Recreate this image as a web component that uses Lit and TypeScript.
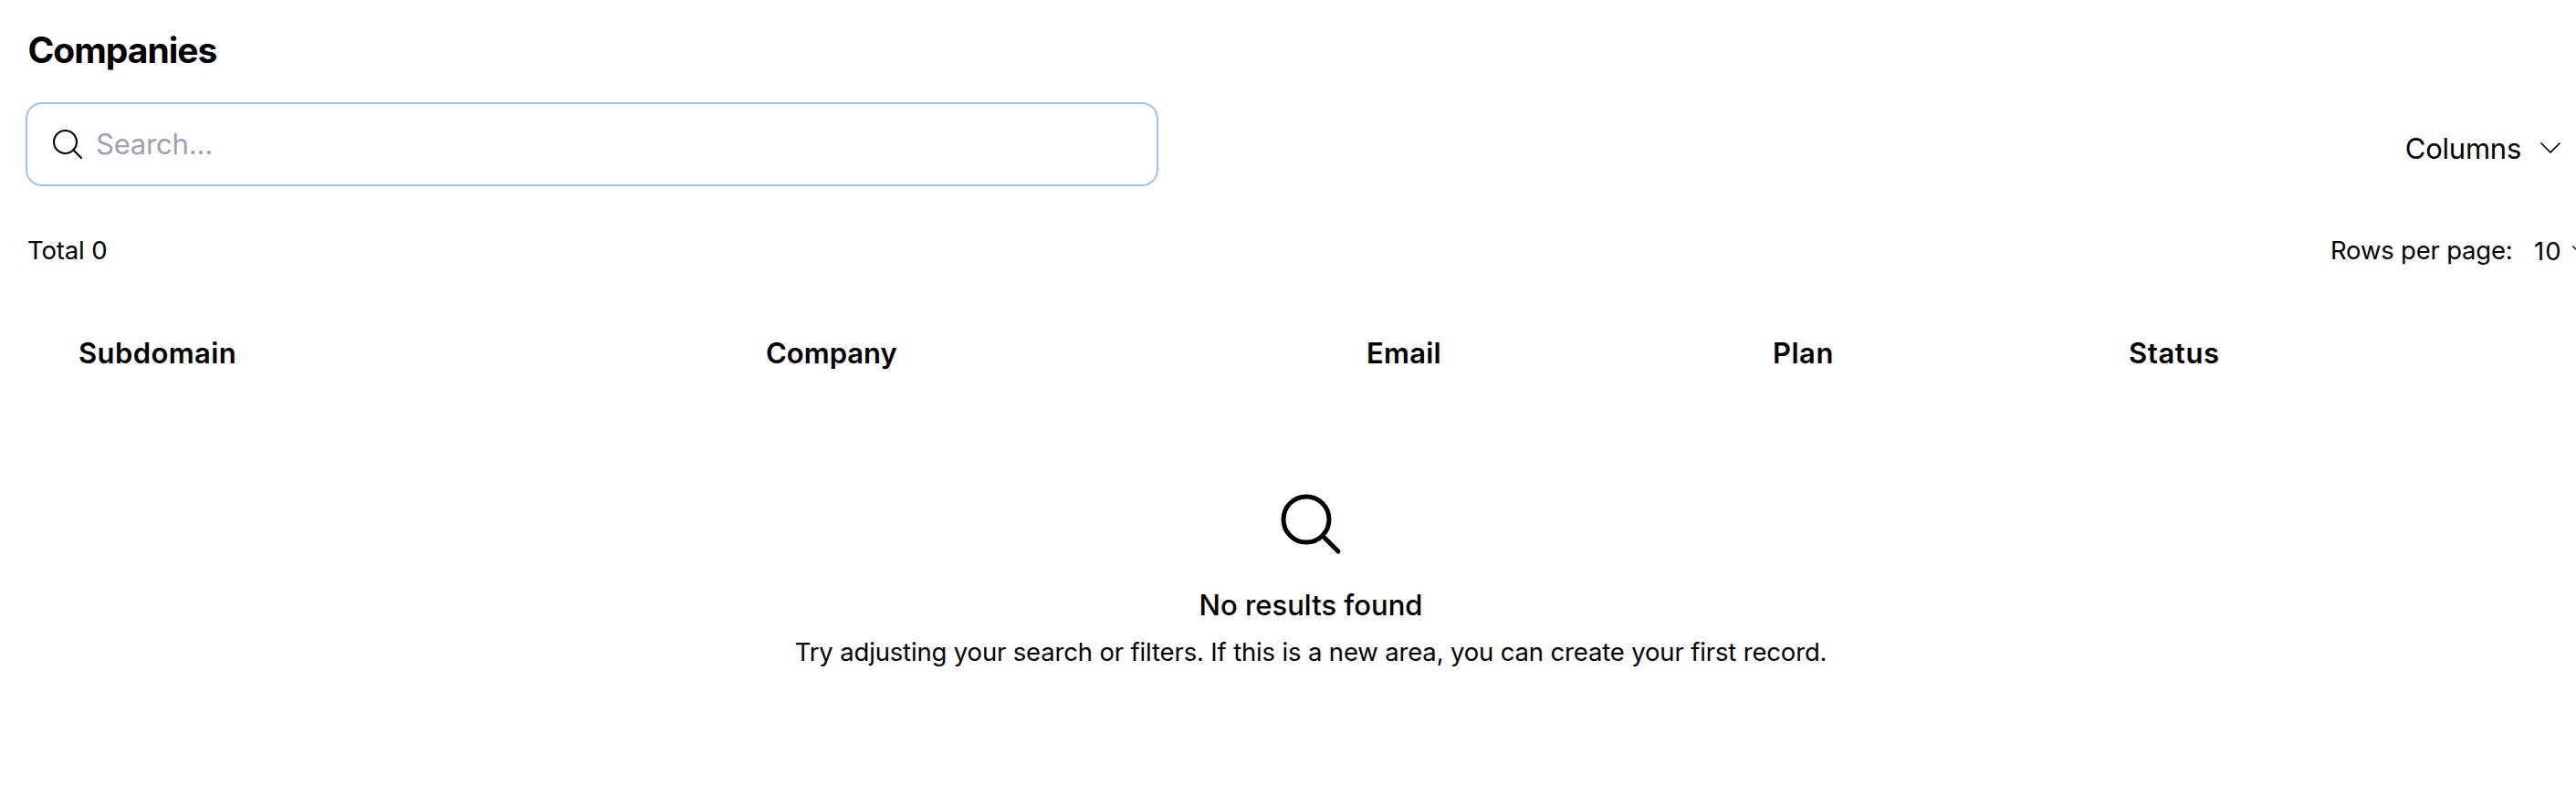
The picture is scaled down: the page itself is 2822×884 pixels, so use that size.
import { LitElement, html, css } from "lit";
import { customElement, property, state } from "lit/decorators.js";

@customElement("search-icon")
class SearchIcon extends LitElement {
  @property({ type: Number }) size = 40;
  @property({ type: Number }) weight = 1.25;

  static styles = css`
    :host {
      display: block;
      flex: none;
    }
    svg {
      display: block;
    }
  `;

  render() {
    return html`<svg
      width=${this.size}
      height=${this.size}
      viewBox="0 0 24 24"
      fill="none"
      stroke="currentColor"
      stroke-width=${this.weight}
      stroke-linecap="round"
      stroke-linejoin="round"
    >
      <circle cx="10.5" cy="10.5" r="7.5" />
      <path d="m21 21-5.197-5.197" />
    </svg>`;
  }
}

@customElement("app-root")
class AppRoot extends LitElement {
  @state() private columns = [
    { name: "Subdomain", cls: "subdomain" },
    { name: "Company", cls: "company" },
    { name: "Email", cls: "email" },
    { name: "Plan", cls: "plan" },
    { name: "Status", cls: "status" },
  ];

  static styles = css`
    :host {
      display: block;
      height: 884px;
      overflow: hidden;
      background: #fff;
      color: #000;
      font-family: Inter, "Liberation Sans", sans-serif;
      font-size: 31px;
      line-height: 48px;
      white-space: nowrap;
    }
    .page {
      display: flex;
      flex-direction: column;
      padding: 27px 0 0 28px;
    }
    h1 {
      margin: 0 0 29px 2.5px;
      font-size: 39px;
      line-height: 56px;
      font-weight: 700;
      letter-spacing: -1px;
    }
    .toolbar {
      display: flex;
      justify-content: space-between;
      align-items: center;
      height: 92px;
      padding-right: 17px;
    }
    .search {
      display: flex;
      align-items: center;
      box-sizing: border-box;
      width: 1241px;
      height: 92px;
      padding: 0 24px;
      border: 2px solid #a3bffa;
      border-radius: 18px;
    }
    .search input {
      flex: 1;
      min-width: 0;
      margin-left: 11px;
      padding: 0;
      border: 0;
      outline: 0;
      background: none;
      font: inherit;
      letter-spacing: -0.2px;
    }
    .search input::placeholder {
      color: #9ca3af;
      opacity: 1;
    }
    .columns {
      display: flex;
      align-items: center;
      padding-top: 9px;
      letter-spacing: -0.25px;
    }
    .columns svg {
      margin: 0 0 2px 21px;
    }
    svg {
      display: block;
      flex: none;
    }
    .summary {
      display: flex;
      justify-content: space-between;
      height: 48px;
      margin-top: 46px;
      padding-left: 2px;
      font-size: 27.5px;
    }
    .total {
      letter-spacing: -0.15px;
    }
    .pager {
      display: flex;
      width: 269px;
      overflow: hidden;
    }
    .pager .label {
      flex: none;
      width: 223px;
      letter-spacing: -0.2px;
    }
    .pager .count {
      flex: none;
      width: 42px;
      padding-top: 1px;
      letter-spacing: 1px;
    }
    .pager svg {
      margin-top: 19px;
    }
    .head {
      display: grid;
      grid-template-columns: 753px 658px 445px 390px 1fr;
      margin-top: 65px;
      padding-left: 58px;
      font-weight: 600;
    }
    .subdomain {
      letter-spacing: 0.4px;
    }
    .email {
      letter-spacing: 0.25px;
    }
    .plan {
      letter-spacing: 0.5px;
    }
    .status {
      letter-spacing: 0.6px;
    }
    .empty {
      display: flex;
      flex-direction: column;
      align-items: center;
      width: 2816px;
      margin-top: 123px;
    }
    .empty .title {
      margin-top: 25px;
      font-weight: 500;
    }
    .empty .hint {
      margin-top: 3px;
      font-size: 27.5px;
      letter-spacing: -0.16px;
    }
  `;

  private chevron(width: number, height: number) {
    return html`<svg
      width=${width}
      height=${height}
      viewBox="0 0 22 12"
      fill="none"
      stroke="currentColor"
      stroke-width="1.7"
      stroke-linecap="round"
      stroke-linejoin="round"
    >
      <path d="M1 1 11 11 21 1" />
    </svg>`;
  }

  render() {
    return html`
      <div class="page">
        <h1>Companies</h1>
        <div class="toolbar">
          <label class="search">
            <search-icon></search-icon>
            <input type="text" placeholder="Search..." />
          </label>
          <div class="columns">Columns ${this.chevron(22, 12)}</div>
        </div>
        <div class="summary">
          <div class="total">Total 0</div>
          <div class="pager">
            <span class="label">Rows per page:</span>
            <span class="count">10</span>
            ${this.chevron(18, 10)}
          </div>
        </div>
        <div class="head">
          ${this.columns.map((c) => html`<div class=${c.cls}>${c.name}</div>`)}
        </div>
        <div class="empty">
          <search-icon size="80" weight="1.5"></search-icon>
          <div class="title">No results found</div>
          <div class="hint">
            Try adjusting your search or filters. If this is a new area, you can create your first record.
          </div>
        </div>
      </div>
    `;
  }
}
